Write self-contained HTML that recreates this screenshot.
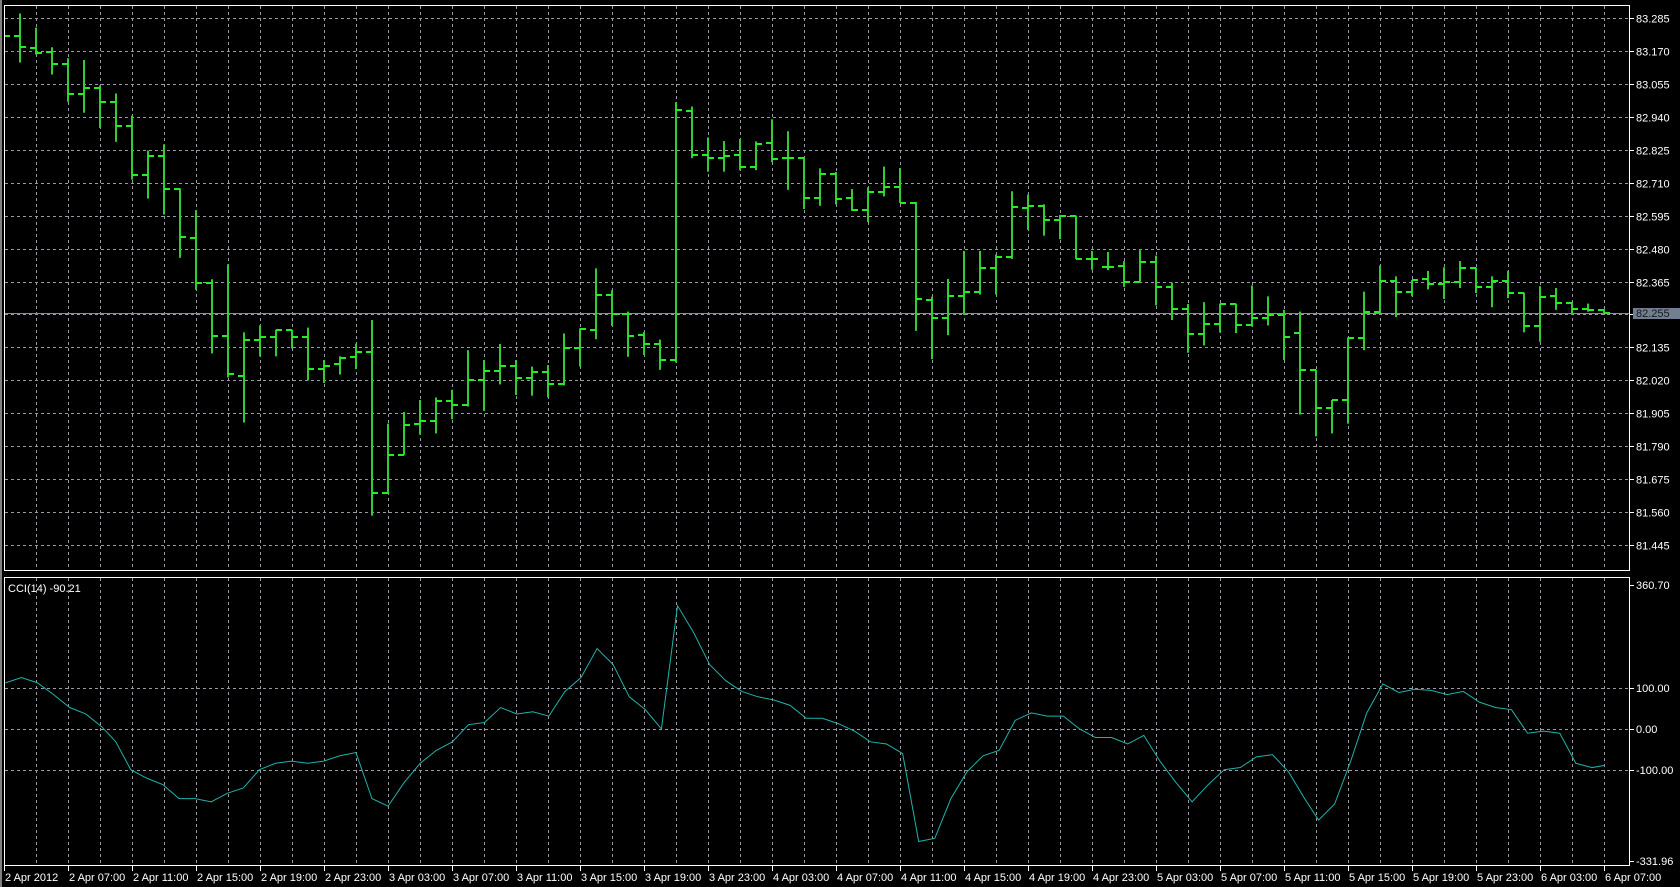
<!DOCTYPE html>
<html><head><meta charset="utf-8"><style>
html,body{margin:0;padding:0;background:#000;width:1680px;height:887px;overflow:hidden}
svg{position:absolute;left:0;top:0}
text{font-family:"Liberation Sans",sans-serif;font-size:11px;fill:#fff}
</style></head><body>
<svg id="s" width="1680" height="887" xmlns="http://www.w3.org/2000/svg">
<rect x="0" y="0" width="1680" height="887" fill="#000"/>
<rect x="0" y="0" width="2" height="887" fill="#808080"/>
<g id="grid"></g>
<line x1="4" y1="313.5" x2="1630" y2="313.5" stroke="#8090a0" stroke-width="1"/>
<g id="bars"></g>
<g transform="scale(1.072)"><polyline id="cci" fill="none" stroke="#20b2aa" stroke-width="1" vector-effect="non-scaling-stroke" points="5,637 20,632 35,637 50,648 65,660 80,666 95,678 108,692 122,718 137,726 152,732 167,745 182,745 197,748 212,740 227,735 242,718 257,712 272,710 287,712 302,710 317,705 332,702 347,745 362,752 377,730 392,712 407,700 422,692 437,676 452,674 467,660 482,666 497,664 512,668 527,645 542,632 557,605 572,620 587,650 602,662 617,680 632,565 647,590 662,620 677,635 692,645 707,650 722,653 737,658 752,670 767,670 782,675 797,682 812,692 827,694 842,703 857,785 872,782 887,745 902,720 917,705 932,700 947,672 962,665 977,668 992,668 1007,680 1022,688 1037,688 1052,694 1067,686 1082,710 1097,730 1112,748 1127,732 1142,718 1157,716 1172,706 1187,704 1202,720 1217,745 1230,765 1245,750 1260,710 1275,665 1290,638 1305,646 1320,643 1335,644 1350,648 1365,645 1380,655 1395,660 1410,662 1425,684 1440,682 1455,684 1470,712 1485,716 1497,714"/></g>
<g fill="none" stroke="#fff" stroke-width="1">
<rect x="4.5" y="5.5" width="1625" height="565"/>
<rect x="4.5" y="577.5" width="1625" height="288"/>
</g>
<g id="labels"></g>
<rect x="1633" y="308" width="47" height="11" fill="#708090"/>
<text x="1636" y="317" style="fill:#1a1a1a">82.255</text>
<text x="8" y="592">CCI(14) -90.21</text>
</svg>
<script>
var NS="http://www.w3.org/2000/svg",s=document.getElementById('s');
function el(p,t,a,txt){var e=document.createElementNS(NS,t);for(var k in a)e.setAttribute(k,a[k]);if(txt!=null)e.textContent=txt;document.getElementById(p).appendChild(e);return e;}
var gc="#9a9aa6";
for(var k=0;k<=16;k++){var y=Math.round(18+32.94*k)+0.5;el('grid','line',{x1:5,y1:y,x2:1630,y2:y,stroke:gc,'stroke-dasharray':'3,3'});
 var p=(83.285-0.115*k).toFixed(3);el('labels','line',{x1:1630,y1:y,x2:1634,y2:y,stroke:'#fff'});if(p!=='82.250')el('labels','text',{x:1636,y:y+4},p);}
[688,729,770].forEach(function(y){el('grid','line',{x1:5,y1:y+.5,x2:1630,y2:y+.5,stroke:gc,'stroke-dasharray':'3,3'});});
var cl=[[585,'360.70'],[688,'100.00'],[729,'0.00'],[770,'-100.00'],[861,'-331.96']];
cl.forEach(function(c){el('labels','line',{x1:1630,y1:c[0]+.5,x2:1634,y2:c[0]+.5,stroke:'#fff'});el('labels','text',{x:1636,y:c[0]+4},c[1]);});
for(var x=36;x<=1604;x+=32){el('grid','line',{x1:x+.5,y1:6,x2:x+.5,y2:570,stroke:gc,'stroke-dasharray':'3,3'});el('grid','line',{x1:x+.5,y1:578,x2:x+.5,y2:865,stroke:gc,'stroke-dasharray':'3,3'});}
var tl=['2 Apr 2012','2 Apr 07:00','2 Apr 11:00','2 Apr 15:00','2 Apr 19:00','2 Apr 23:00','3 Apr 03:00','3 Apr 07:00','3 Apr 11:00','3 Apr 15:00','3 Apr 19:00','3 Apr 23:00','4 Apr 03:00','4 Apr 07:00','4 Apr 11:00','4 Apr 15:00','4 Apr 19:00','4 Apr 23:00','5 Apr 03:00','5 Apr 07:00','5 Apr 11:00','5 Apr 15:00','5 Apr 19:00','5 Apr 23:00','6 Apr 03:00','6 Apr 07:00'];
tl.forEach(function(t,i){var x=4+64*i;el('labels','line',{x1:x+.5,y1:866,x2:x+.5,y2:871,stroke:'#fff'});el('labels','text',{x:x+1,y:881},t);});
var B=[[37,172,100,128],[76,150,131,147],[130,205,142,175],[160,280,175,258],[165,310,258,241],[235,352,241,280],[257,390,280,346],[318,494,346,481],[414,546,481,428],[397,590,428,520],[518,709,520,652],[578,797,654,777],[768,972,777,924],[727,1038,924,1028],[914,1162,1034,935],[895,980,935,927],[907,980,927,907],[907,958,907,928],[901,1046,928,1015],[990,1053,1015,1006],[980,1030,1001,984],[945,1015,982,968],[880,1418,968,1355],[1165,1356,1355,1250],[1133,1251,1250,1168],
[1100,1195,1166,1157],[1093,1192,1157,1102],[1072,1153,1102,1113],[963,1118,1113,1045],[990,1130,1045,1020],[946,1057,1020,1006],[990,1086,1006,1040],[1008,1088,1040,1023],[1004,1093,1023,1056],[917,1060,1056,957],[903,1008,957,905],[738,933,907,811],[798,896,811,864],[857,981,864,924],[913,976,920,946],[934,1017,946,990],[281,997,990,302],[293,435,305,426],[378,472,426,434],[388,472,434,428],[382,468,426,459],[389,468,459,396],[328,446,393,437],[361,522,435,434],[433,575,434,544],[463,566,544,478],
[473,562,478,547],[520,580,544,577],[515,611,577,527],[458,540,527,514],[462,558,514,557],[555,910,557,822],[816,988,825,875],[767,922,875,814],[690,866,814,803],[690,810,803,736],[700,810,736,706],[526,712,706,569],[535,632,572,566],[562,648,566,605],[591,658,605,593],[593,712,593,712],[690,742,712,712],[693,743,735,735],[718,789,731,775],[688,775,775,720],[703,840,720,789],[777,880,789,849],[836,970,849,918],[831,950,918,890],[835,914,890,835],[835,916,835,893],
[785,898,893,875],[815,895,875,865],[852,990,865,927],[857,1140,917,1017],[1017,1200,1017,1122],[1100,1192,1122,1100],[928,1165,1100,930],[802,963,930,858],[730,860,858,772],[760,872,772,802],[770,815,802,771],[745,796,768,780],[735,822,780,776],[718,792,776,738],[736,806,738,788],[760,845,788,773],[745,820,772,807],[805,914,807,897],[787,940,897,816],[792,852,814,834],[833,865,834,849],[835,857,849,853],[850,862,853,860]];
var f=2.75;
B.forEach(function(b,i){var x=20+16*i;var h=b[0]/f,l=b[1]/f,o=Math.round(b[2]/f),c=Math.round(b[3]/f);
 el('bars','line',{x1:x,y1:h,x2:x,y2:l,stroke:'#32cd32','stroke-width':2});
 el('bars','line',{x1:x-6,y1:o,x2:x,y2:o,stroke:'#22ee22','stroke-width':2});
 el('bars','line',{x1:x,y1:c,x2:x+6,y2:c,stroke:'#22ee22','stroke-width':2});});
el('bars','line',{x1:4,y1:36,x2:10,y2:36,stroke:'#22ee22','stroke-width':2});
</script>
</body></html>
